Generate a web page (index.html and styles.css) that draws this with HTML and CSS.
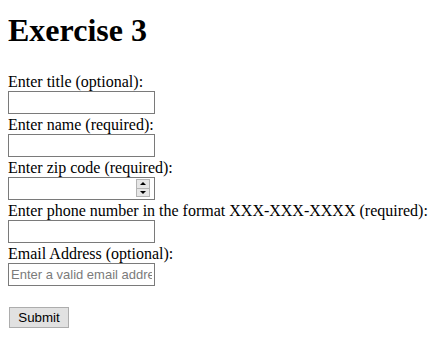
FILE: index.html
```html
<!DOCTYPE html>
<html>
<head>
<meta charset="utf-8">
<title>Exercise 3</title>
<link rel="stylesheet" href="styles.css">
</head>
<body>
<h1 class="title">Exercise 3</h1>
<form class="form">
Enter title (optional):<br>
<input class="field" type="text"><br>
Enter name (required):<br>
<input class="field" type="text"><br>
Enter zip code (required):<br>
<span class="num"><input class="field" type="text"><span class="spin"><span class="spin-btn"><span class="tri-up"></span></span><span class="spin-btn"><span class="tri-down"></span></span></span></span><br>
Enter phone number in the format XXX-XXX-XXXX (required):<br>
<input class="field" type="text"><br>
Email Address (optional):<br>
<input class="field" type="text" placeholder="Enter a valid email address"><br>
<br>
<button class="submit" type="button">Submit</button>
</form>
</body>
</html>
```

FILE: styles.css
```css
html, body {
  background: #ffffff;
}
body {
  margin: 8px;
  font-family: "Liberation Serif", "Times New Roman", serif;
  font-size: 16px;
  color: #000000;
}
.title {
  font-size: 32px;
  font-weight: bold;
  margin: 4px 0 24px 0;
}
.form {
  margin: 0;
}
.field {
  box-sizing: border-box;
  width: 147px;
  height: 23px;
  margin: 0 0 2px 0;
  padding: 1px 2px;
  border: 1px solid #7a7a7a;
  border-radius: 0;
  background: #ffffff;
  font-family: "Liberation Sans", Arial, sans-serif;
  font-size: 13px;
  color: #000000;
  outline: none;
}
.field::placeholder {
  color: #7b7b7b;
}
.num {
  position: relative;
  display: inline-block;
}
.spin {
  position: absolute;
  top: 2px;
  right: 5px;
  width: 14px;
  height: 18px;
  display: flex;
  flex-direction: column;
  border: 1px solid #b4b4b4;
  box-sizing: border-box;
  background: #e6e6e6;
}
.spin-btn {
  flex: 1;
  display: flex;
  align-items: center;
  justify-content: center;
}
.spin-btn + .spin-btn {
  border-top: 1px solid #b4b4b4;
}
.tri-up {
  width: 0;
  height: 0;
  border-left: 3px solid transparent;
  border-right: 3px solid transparent;
  border-bottom: 3px solid #000000;
}
.tri-down {
  width: 0;
  height: 0;
  border-left: 3px solid transparent;
  border-right: 3px solid transparent;
  border-top: 3px solid #000000;
}
.submit {
  margin: 1px 0 0 1px;
  width: 60px;
  height: 21px;
  padding: 0;
  border: 1px solid #adadad;
  border-radius: 0;
  background: #e1e1e1;
  font-family: "Liberation Sans", Arial, sans-serif;
  font-size: 13.33px;
  color: #000000;
}
```
